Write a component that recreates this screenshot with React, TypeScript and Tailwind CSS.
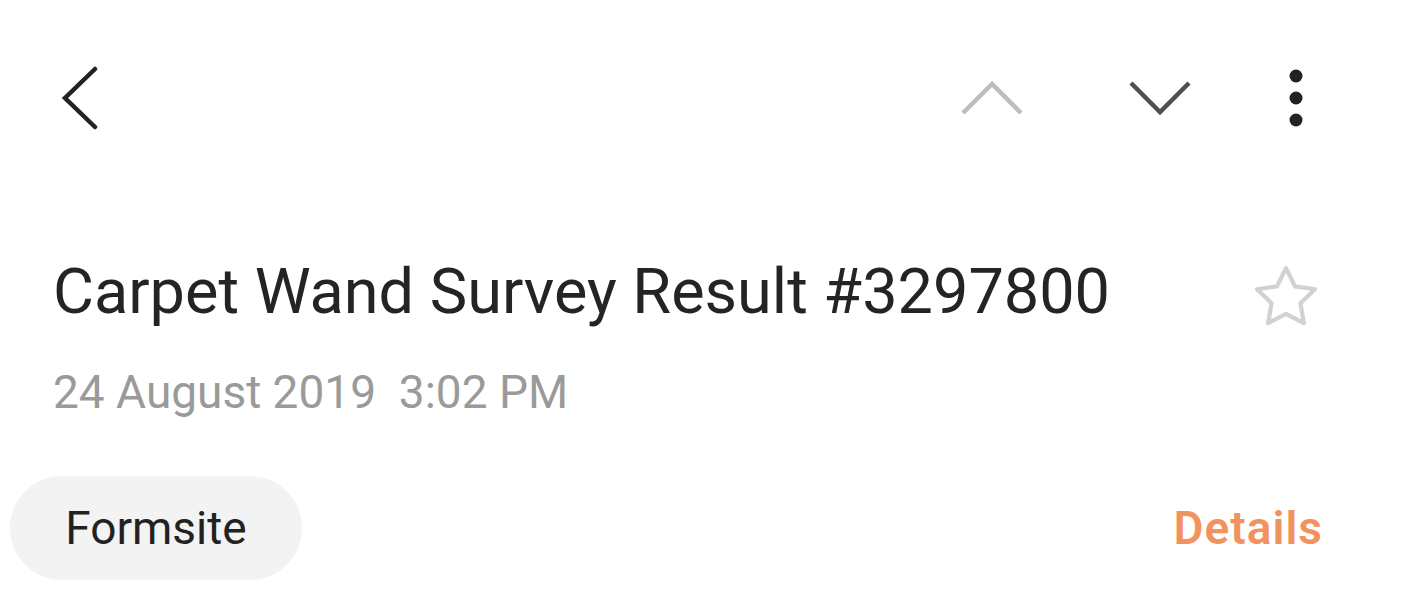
export default function App() {
  return (
    <div
      className="w-[1407px] h-[593px] bg-white overflow-hidden"
      style={{ fontFamily: "Roboto, 'Noto Sans', sans-serif" }}
    >
      {/* Top bar */}
      <div className="flex items-center h-[196px]">
        <svg className="ml-[58px]" width="44" height="64" viewBox="0 0 44 64">
          <polyline points="37,3 7,32 37,61" fill="none" stroke="#222" strokeWidth="4.5" strokeLinecap="round" />
        </svg>
        <div className="flex-1" />
        <svg width="64" height="36" viewBox="0 0 64 36">
          <polyline points="3,33 32,4 61,33" fill="none" stroke="#bdbdbd" strokeWidth="4.5" />
        </svg>
        <svg className="ml-[104px]" width="64" height="36" viewBox="0 0 64 36">
          <polyline points="3,3 32,32 61,3" fill="none" stroke="#505050" strokeWidth="4.5" />
        </svg>
        <svg className="ml-[96px] mr-[103px]" width="16" height="60" viewBox="0 0 16 60">
          <circle cx="8" cy="8" r="6.5" fill="#222" />
          <circle cx="8" cy="30" r="6.5" fill="#222" />
          <circle cx="8" cy="52" r="6.5" fill="#222" />
        </svg>
      </div>

      {/* Title */}
      <div className="flex items-start justify-between mt-[60px] pl-[53px] pr-[82px]">
        <div>
          <div className="text-[63px] leading-[72px] text-[#242424]">
            Carpet Wand Survey Result #3297800
          </div>
          <div className="mt-[38px] text-[46px] leading-[52px] text-[#9a9a9a]">
            24 August 2019&nbsp;&nbsp;3:02 PM
          </div>
        </div>
        <svg className="mt-[3px]" width="78" height="78" viewBox="0 0 24 24">
          <path
            d="M12 2.8l2.75 5.6 6.15.9-4.45 4.35 1.05 6.1L12 16.85 6.5 19.75l1.05-6.1L3.1 9.3l6.15-.9z"
            fill="none"
            stroke="#d2d2d2"
            strokeWidth="1.3"
            strokeLinejoin="round"
          />
        </svg>
      </div>

      {/* Sender row */}
      <div className="flex items-center justify-between mt-[58px] pl-[10px] pr-[84px]">
        <div className="h-[104px] w-[292px] rounded-full bg-[#f3f3f3] flex items-center justify-center text-[46px] text-[#222]">
          Formsite
        </div>
        <div className="text-[46px] font-semibold tracking-[1px] text-[#f2935f]">Details</div>
      </div>
    </div>
  );
}
